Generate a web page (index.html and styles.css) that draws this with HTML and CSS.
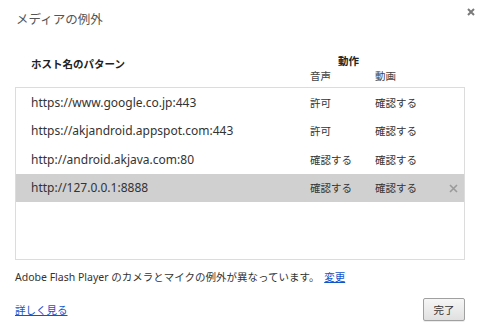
FILE: index.html
```html
<!DOCTYPE html>
<html lang="ja">
<head>
<meta charset="utf-8">
<link rel="stylesheet" href="styles.css">
</head>
<body>
<div class="dialog">
  <div class="titlebar">
    <h1 class="title">メディアの例外</h1>
    <span class="close">
      <svg width="8" height="8" viewBox="0 0 8 8"><path d="M1 1L7 7M7 1L1 7" stroke="#7a7a7a" stroke-width="2"/></svg>
    </span>
  </div>
  <div class="header">
    <div class="h-pattern j">ホスト名のパターン</div>
    <div class="h-action">
      <div class="h-action-title j">動作</div>
      <div class="h-sub">
        <span class="col-a j">音声</span>
        <span class="col-v j">動画</span>
      </div>
    </div>
  </div>
  <div class="list">
    <div class="row"><span class="host">https://www.google.co.jp:443</span><span class="col-a j">許可</span><span class="col-v j">確認する</span></div>
    <div class="row"><span class="host">https://akjandroid.appspot.com:443</span><span class="col-a j">許可</span><span class="col-v j">確認する</span></div>
    <div class="row"><span class="host">http://android.akjava.com:80</span><span class="col-a j">確認する</span><span class="col-v j">確認する</span></div>
    <div class="row selected"><span class="host">http://127.0.0.1:8888</span><span class="col-a j">確認する</span><span class="col-v j">確認する</span>
      <span class="row-del"><svg width="9" height="9" viewBox="0 0 9 9"><path d="M1 1L8 8M8 1L1 8" stroke="#9a9a9a" stroke-width="1.6"/></svg></span>
    </div>
  </div>
  <p class="note">Adobe Flash Player <span class="j">のカメラとマイクの例外が異なっています。</span> <a href="#" class="link j">変更</a></p>
  <div class="footer">
    <a href="#" class="link j">詳しく見る</a>
    <button class="done j">完了</button>
  </div>
</div>
</body>
</html>
```
FILE: styles.css
```css
html, body {
  margin: 0;
  padding: 0;
  background: #fff;
}
body {
  font-family: "Noto Sans", "Noto Sans CJK JP", sans-serif;
  font-size: 12px;
  color: #333;
  width: 480px;
  height: 333px;
  overflow: hidden;
}
.j {
  font-family: "Noto Sans CJK JP", sans-serif;
  font-size: 10.5px;
}
.dialog {
  padding: 0 15px 0 15px;
}
.titlebar {
  display: flex;
  justify-content: space-between;
  align-items: flex-start;
  height: 38px;
}
.title {
  margin: 8px 0 0 1px;
  font-family: "Noto Sans CJK JP", sans-serif;
  font-size: 12.5px;
  font-weight: normal;
  color: #555;
  line-height: 22px;
}
.close {
  margin-top: 8px;
  margin-right: -10px;
  display: flex;
}
.header {
  display: flex;
  height: 49px;
  padding-left: 16px;
}
.h-pattern {
  font-weight: bold;
  margin-top: 18px;
  color: #222;
  flex: 0 0 279px;
}
.h-action {
  display: flex;
  flex-direction: column;
  margin-top: 15px;
}
.h-action-title {
  font-weight: bold;
  color: #222;
  padding-left: 28px;
  line-height: 16px;
}
.h-sub {
  display: flex;
  line-height: 14px;
  color: #444;
}
.list {
  border: 1px solid #dcdcdc;
  height: 171px;
  padding-top: 0;
}
.row {
  display: flex;
  align-items: center;
  height: 28.5px;
  padding-left: 15px;
  position: relative;
}
.row.selected {
  background: #d0d0d0;
}
.host {
  flex: 0 0 279px;
}
.col-a {
  flex: 0 0 65px;
}
.col-v {
  flex: 0 0 60px;
}
.row-del {
  position: absolute;
  right: 6px;
  top: 10px;
  display: flex;
}
.note {
  margin: 9px 0 0 0;
  line-height: 16px;
  font-size: 10.5px;
}
.link {
  color: #1155cc;
  text-decoration: underline;
  margin-left: 2px;
}
.footer .link {
  margin-left: 0;
}
.footer {
  display: flex;
  justify-content: space-between;
  align-items: center;
  margin-top: 13px;
}
.done {
  color: #333;
  width: 42px;
  height: 23px;
  border: 1px solid #a0a0a0;
  border-radius: 2px;
  background: linear-gradient(#f6f6f6, #e0e0e0);
  box-shadow: 0 1px 0 rgba(0,0,0,0.08);
  padding: 0;
}
```
